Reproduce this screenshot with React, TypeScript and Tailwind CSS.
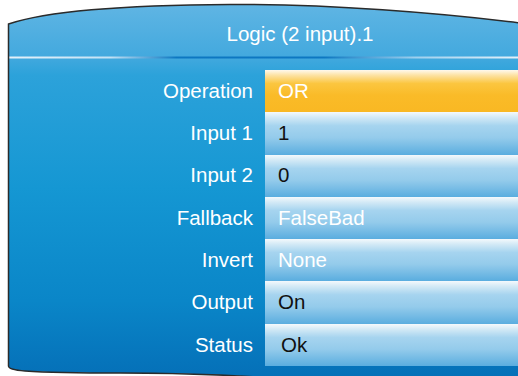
import React from 'react';

type Row = {
    label: string;
    value: string;
    tone: 'orange' | 'blue';
    text: 'white' | 'black';
    indent?: boolean;
};

const rows: Row[] = [
    { label: 'Operation', value: 'OR', tone: 'orange', text: 'white' },
    { label: 'Input 1', value: '1', tone: 'blue', text: 'black' },
    { label: 'Input 2', value: '0', tone: 'blue', text: 'black' },
    { label: 'Fallback', value: 'FalseBad', tone: 'blue', text: 'white' },
    { label: 'Invert', value: 'None', tone: 'blue', text: 'white' },
    { label: 'Output', value: 'On', tone: 'blue', text: 'black' },
    { label: 'Status', value: 'Ok', tone: 'blue', text: 'black', indent: true },
];

// rahmen des geräte-displays (gebogene ober- und unterkante + trennlinie)
const Frame: React.FC = () => (
    <svg className="absolute inset-0" width="518" height="376" viewBox="0 0 518 376">
        <defs>
            <linearGradient id="panelBg" x1="0" y1="0" x2="0" y2="376" gradientUnits="userSpaceOnUse">
                <stop offset="0" stopColor="#62b6e4" />
                <stop offset="0.15" stopColor="#43a9de" />
                <stop offset="0.2" stopColor="#2ca2da" />
                <stop offset="0.5" stopColor="#1597d3" />
                <stop offset="0.8" stopColor="#0a86c8" />
                <stop offset="1" stopColor="#0570b8" />
            </linearGradient>
            <linearGradient id="sepLine" x1="8" y1="0" x2="518" y2="0" gradientUnits="userSpaceOnUse">
                <stop offset="0" stopColor="#e4f1fa" />
                <stop offset="0.2" stopColor="#c4e2f5" />
                <stop offset="0.33" stopColor="#0d77c1" />
                <stop offset="0.62" stopColor="#0d77c1" />
                <stop offset="0.8" stopColor="#9fd0ee" />
                <stop offset="1" stopColor="#e4f1fa" />
            </linearGradient>
        </defs>
        <path
            d="M8.5,24 C50,10 130,5 230,4.5 C330,4 440,13 520,23 L520,380 L300,380 C250,376 200,373 120,373 C70,373 40,372 25,371 C12,370 8.5,368 8.5,366 Z"
            fill="url(#panelBg)"
        />
        <rect x="9" y="56.5" width="509" height="2" fill="url(#sepLine)" />
        <path
            d="M520,23 C440,13 330,4 230,4.5 C130,5 50,10 8.5,24 L8.5,366 C8.5,368 12,370 25,371 C40,372 70,373 120,373 C200,373 250,376 300,380"
            fill="none"
            stroke="#2b2b2b"
            strokeWidth="1.5"
        />
    </svg>
);

const App: React.FC = () => {
    return (
        <div
            className="relative w-[518px] h-[376px] overflow-hidden bg-white"
            style={{ fontFamily: '"Liberation Sans", Arial, sans-serif' }}
        >
            <Frame />
            <div className="relative flex flex-col pl-[9px]">
                <div className="h-[59px] flex justify-center pl-[73px] pt-[22px]">
                    <span className="text-white text-[20.5px] leading-[24px]">Logic (2 input).1</span>
                </div>
                <div className="h-[11px]" />
                <div className="flex flex-col">
                    {rows.map((row) => (
                        <div key={row.label} className="flex h-[42.3px]">
                            <div className="w-[256px] flex items-center justify-end pr-[12px] text-white text-[20.5px]">
                                {row.label}
                            </div>
                            <div
                                className={`flex-1 flex items-center text-[20.5px] ${row.indent ? 'pl-[16px]' : 'pl-[13px]'} ${
                                    row.tone === 'orange'
                                        ? 'bg-[linear-gradient(to_bottom,#fff9ee_0%,#fde3a6_12%,#fbc640_32%,#fabb28_60%,#f9b823_100%)]'
                                        : 'bg-[linear-gradient(to_bottom,#f4f9fc_0%,#d4eaf6_12%,#a6d4ef_32%,#94cbeb_60%,#5aaddf_100%)]'
                                } ${row.text === 'white' ? 'text-white' : 'text-[#111111]'}`}
                            >
                                {row.value}
                            </div>
                        </div>
                    ))}
                </div>
            </div>
        </div>
    );
};

export default App;
